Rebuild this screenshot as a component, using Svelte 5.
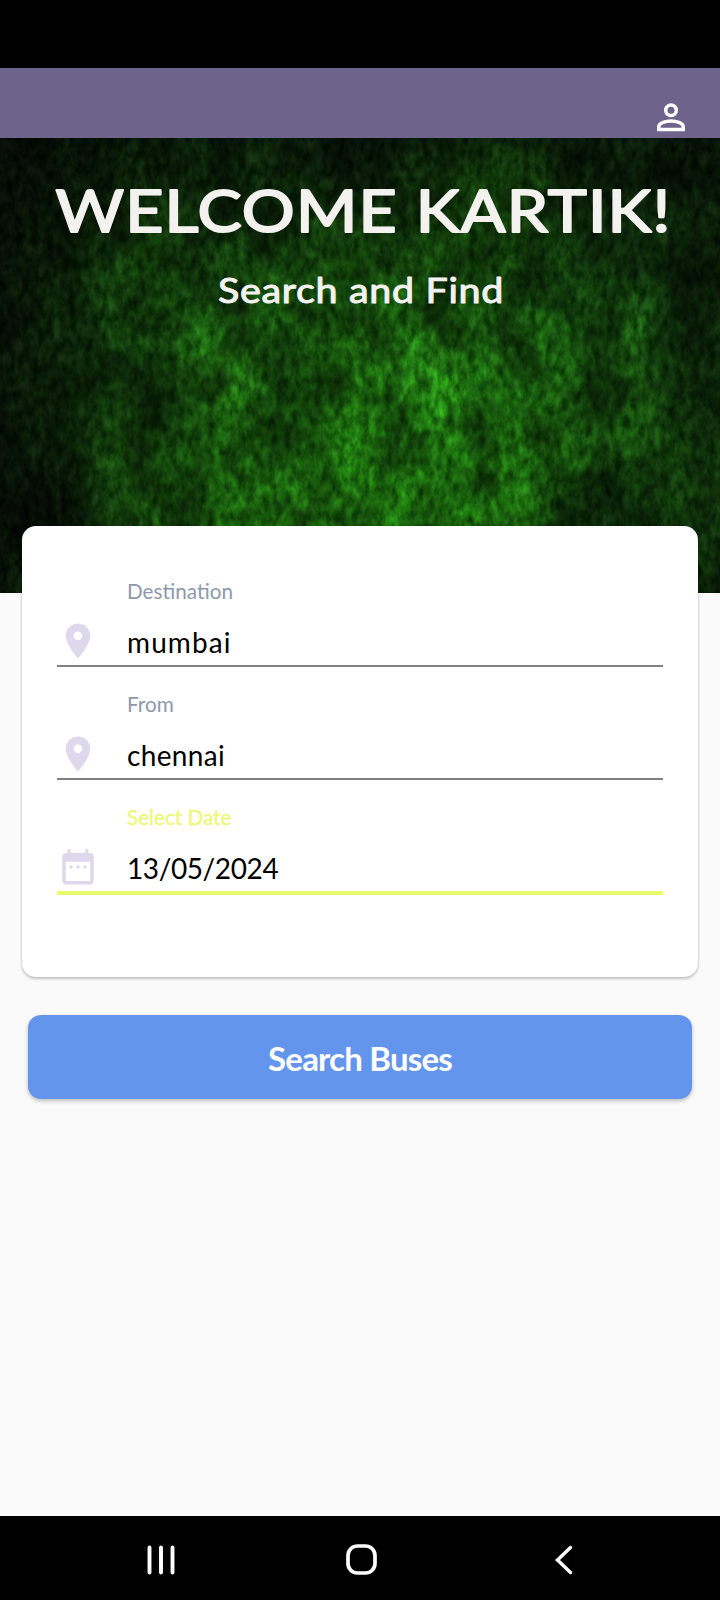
<script>
  const fields = [
    { label: 'Destination', value: 'mumbai', icon: 'pin', active: false, spacing: 1.1 },
    { label: 'From', value: 'chennai', icon: 'pin', active: false, spacing: 0.35 },
    { label: 'Select Date', value: '13/05/2024', icon: 'calendar', active: true, spacing: -0.4 }
  ];
  // Light and dark patches of the grass backdrop: x, y, rx, ry, colour, opacity
  const patches = [
    [380, 340, 400, 320, '#186c08', 0.85],
    [410, 245, 120, 100, '#259412', 0.5],
    [425, 228, 60, 50, '#32b81c', 0.45],
    [215, 230, 65, 95, '#2c9c16', 0.5],
    [300, 375, 170, 100, '#248c10', 0.5],
    [450, 340, 150, 130, '#229010', 0.5],
    [540, 225, 120, 110, '#1f8010', 0.3],
    [150, 120, 80, 110, '#176008', 0.5],
    [490, 60, 110, 120, '#176208', 0.7],
    [630, 230, 65, 110, '#207a12', 0.35],
    [350, 130, 160, 80, '#1b6c0b', 0.5],
    [710, 340, 90, 110, '#185f0c', 0.6],
    [130, 330, 70, 110, '#1c6a0c', 0.5],
    [280, 250, 45, 80, '#021003', 0.3],
    [165, 270, 35, 70, '#021003', 0.4],
    [600, 375, 80, 65, '#020d03', 0.7],
    [395, 325, 45, 35, '#041604', 0.2],
    [350, 20, 90, 80, '#020c02', 0.6],
    [620, 50, 100, 80, '#021003', 0.4],
    [55, 385, 90, 120, '#020a02', 0.7]
  ];
</script>

<main>
  <div class="status"></div>
  <header>
    <svg class="person" viewBox="0 0 28 29" width="28" height="29" fill="none" stroke="#fff" stroke-width="3.5">
      <circle cx="14" cy="7.3" r="5.3" />
      <path d="M1.8 26.5V23.8C1.8 19.8 9 18 14 18s12.2 1.8 12.2 5.8v2.7Z" />
    </svg>
  </header>

  <section class="hero">
    <svg class="grass" width="720" height="455" viewBox="0 0 720 455" aria-hidden="true">
      <defs>
        {#each patches as p, i}
          <radialGradient id="patch{i}">
            <stop offset="0" stop-color={p[4]} stop-opacity={p[5]} />
            <stop offset="0.4" stop-color={p[4]} stop-opacity={p[5] * 0.6} />
            <stop offset="0.7" stop-color={p[4]} stop-opacity={p[5] * 0.2} />
            <stop offset="1" stop-color={p[4]} stop-opacity="0" />
          </radialGradient>
        {/each}
        <filter id="grain" x="0" y="0" width="100%" height="100%" color-interpolation-filters="sRGB">
          <feTurbulence type="fractalNoise" baseFrequency="0.13 0.075" numOctaves="3" seed="8" result="fine" />
          <feColorMatrix in="fine" type="matrix" values="1.4 0.5 0 0 -0.45  1.3 0.4 0 0 -0.35  1.1 0.8 0 0 -0.45  0 0 0 0 1" result="fineTone" />
          <feTurbulence type="fractalNoise" baseFrequency="0.024 0.018" numOctaves="4" seed="21" result="broad" />
          <feColorMatrix in="broad" type="matrix" values="2.1 0 0 0 -0.48  2.1 0 0 0 -0.48  2.1 0 0 0 -0.48  0 0 0 0 1" result="broadTone" />
          <feComposite in="SourceGraphic" in2="fineTone" operator="arithmetic" k1="0.72" k2="0.56" k3="0.06" k4="-0.015" result="textured" />
          <feComposite in="textured" in2="broadTone" operator="arithmetic" k1="0.65" k2="0.54" />
        </filter>
        <linearGradient id="edges">
          <stop offset="0" stop-color="#000" stop-opacity="0.7" />
          <stop offset="0.14" stop-color="#000" stop-opacity="0.2" />
          <stop offset="0.3" stop-color="#000" stop-opacity="0" />
          <stop offset="0.88" stop-color="#000" stop-opacity="0" />
          <stop offset="1" stop-color="#000" stop-opacity="0.4" />
        </linearGradient>
        <linearGradient id="topShade" x2="0" y2="1">
          <stop offset="0" stop-color="#000" stop-opacity="0.5" />
          <stop offset="0.35" stop-color="#000" stop-opacity="0" />
        </linearGradient>
      </defs>
      <g filter="url(#grain)">
        <rect width="720" height="455" fill="#0c3408" />
        {#each patches as p, i}
          <ellipse cx={p[0]} cy={p[1]} rx={p[2]} ry={p[3]} fill="url(#patch{i})" />
        {/each}
        <rect width="720" height="455" fill="url(#edges)" />
        <rect width="720" height="455" fill="url(#topShade)" />
      </g>
    </svg>
    <h1>
      <svg width="720" height="76" viewBox="0 0 720 76">
        <text x="51" y="57" font-size="58.5" stroke-width="2" textLength="565" letter-spacing="1" lengthAdjust="spacingAndGlyphs" transform="scale(1.09 1)">WELCOME KARTIK!</text>
      </svg>
    </h1>
    <p>
      <svg width="720" height="44" viewBox="0 0 720 44">
        <text x="218" y="33" font-size="34.5" stroke-width="1" textLength="286" letter-spacing="0.6" lengthAdjust="spacingAndGlyphs">Search and Find</text>
      </svg>
    </p>
  </section>

  <section class="card">
    {#each fields as f}
      <div class="field" class:active={f.active}>
        <div class="icon">
          {#if f.icon === 'pin'}
            <svg width="42" height="42" viewBox="0 0 24 24" fill="#ded8ec">
              <path d="M12 2C8.13 2 5 5.13 5 9c0 5.25 7 13 7 13s7-7.75 7-13c0-3.87-3.13-7-7-7zm0 9.5a2.5 2.5 0 0 1 0-5 2.5 2.5 0 0 1 0 5z" />
            </svg>
          {:else}
            <svg width="42" height="42" viewBox="0 0 24 24" fill="#ded8ec">
              <path d="M19 4h-1V2.5a.9.9 0 0 0-1.8 0V4H7.8V2.5a.9.9 0 0 0-1.8 0V4H5c-1.11 0-1.99.9-1.99 2L3 20c0 1.1.89 2 2 2h14c1.1 0 2-.9 2-2V6c0-1.1-.9-2-2-2zm0 16H5V9h14v11z" />
              <circle cx="8" cy="12" r="1" />
              <circle cx="12" cy="12" r="1" />
              <circle cx="16" cy="12" r="1" />
            </svg>
          {/if}
        </div>
        <div class="text">
          <span class="label">{f.label}</span>
          <span class="value" style="letter-spacing: {f.spacing}px">{f.value}</span>
        </div>
      </div>
    {/each}
  </section>

  <button>Search Buses</button>

  <nav>
    <svg width="28" height="30" viewBox="0 0 28 30" stroke="#fff" stroke-width="3.9" stroke-linecap="round">
      <path d="M2.5 2.5v25M14 2.5v25M25.5 2.5v25" />
    </svg>
    <svg width="31" height="31" viewBox="0 0 31 31" fill="none" stroke="#fff" stroke-width="3.7">
      <rect x="2" y="2" width="27" height="27" rx="9.5" />
    </svg>
    <svg width="18" height="30" viewBox="0 0 18 30" fill="none" stroke="#fff" stroke-width="3.4" stroke-linecap="round">
      <path d="M15.5 2.5L2.5 15L15.5 27.5" />
    </svg>
  </nav>
</main>

<style>
  :global(body) { margin: 0; background: #fafafa; }
  main { width: 720px; height: 1600px; display: flex; flex-direction: column; background: #fafafa; font-family: Lato, sans-serif; overflow: hidden; }
  .status { height: 68px; background: #000; flex: none; }
  header { height: 70px; flex: none; box-sizing: border-box; background: #6e638a; display: flex; justify-content: flex-end; padding: 35px 35px 0 0; }
  .person { display: block; }
  .hero { position: relative; height: 455px; flex: none; overflow: hidden; }
  .grass { position: absolute; inset: 0; display: block; }
  h1, .hero p { position: relative; margin: 0; }
  h1 { padding-top: 37px; }
  .hero p { margin-top: 19px; }
  h1 svg, .hero p svg { display: block; overflow: visible; }
  .hero text { font-family: Lato, sans-serif; font-weight: 400; fill: #f3f2ef; stroke: #f3f2ef; stroke-linejoin: round; }
  .card { position: relative; flex: none; box-sizing: border-box; width: 676px; height: 451px; margin: -67px 22px 0; padding: 28px 35px 0; border-radius: 14px; background: #fff; box-shadow: 0 2px 3px rgba(0,0,0,.2), 0 0 3px rgba(0,0,0,.14); }
  .field { display: flex; height: 113px; box-sizing: border-box; border-bottom: 2px solid #818181; }
  .field.active { border-bottom: 4px solid #eafa6b; height: 115px; }
  .icon { width: 70px; padding-top: 66px; box-sizing: border-box; flex: none; }
  .icon svg { display: block; }
  .text { display: flex; flex-direction: column; }
  .label { margin-top: 25px; font-size: 20.7px; line-height: 24px; color: #8d99aa; }
  .active .label { color: #edf77b; -webkit-text-stroke: .4px #edf77b; }
  .value { margin-top: 22px; font-size: 28px; line-height: 34px; color: #000; }
  button { flex: none; width: 664px; height: 84px; margin: 38px 28px 0; border: 0; border-radius: 13px; background: #6495ed; color: #fff; font: 700 33px/84px Lato, sans-serif; letter-spacing: -.8px; padding: 1px 0 0; box-shadow: 0 2px 4px rgba(0,0,0,.25); }
  nav { flex: none; height: 84px; margin-top: auto; background: #000; box-sizing: border-box; display: flex; align-items: center; padding: 3px 147px 0 147px; }
  nav svg { display: block; }
  nav svg:nth-child(2) { margin-left: 171px; }
  nav svg:nth-child(3) { margin-left: 178px; }
</style>
